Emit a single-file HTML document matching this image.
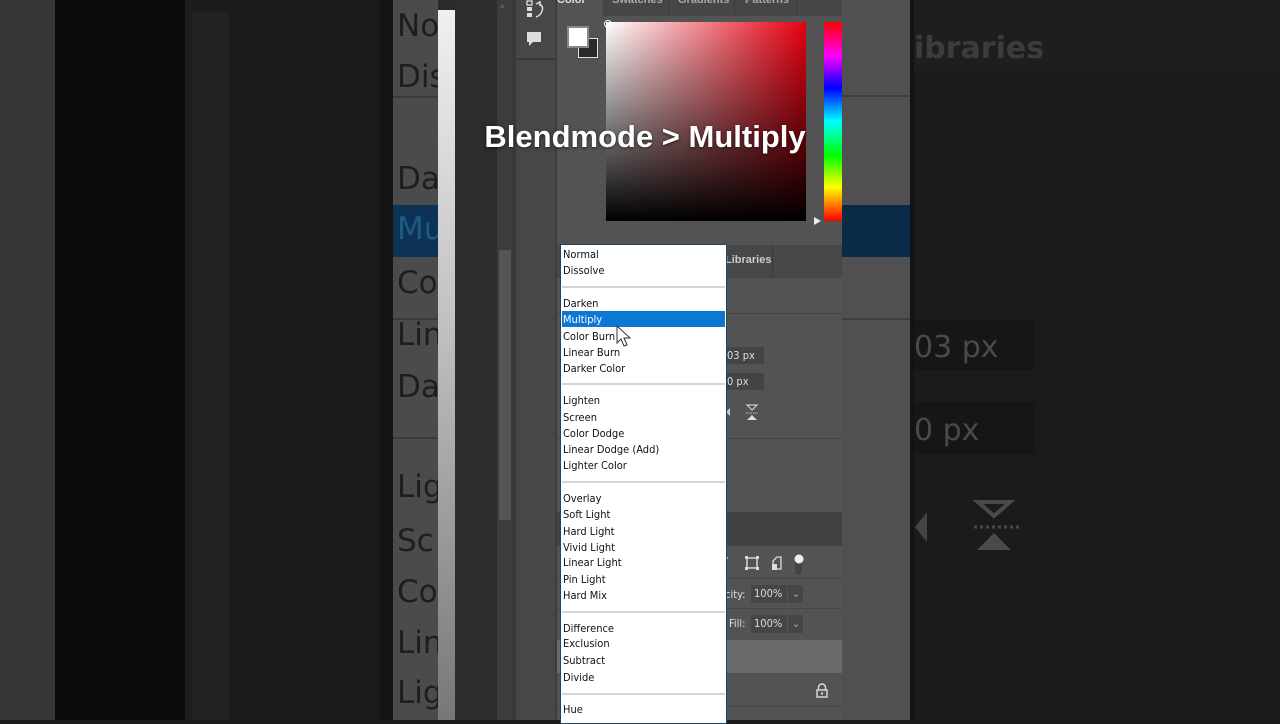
<!DOCTYPE html>
<html><head><meta charset="utf-8"><style>
*{margin:0;padding:0;box-sizing:border-box}
body{width:1280px;height:720px;overflow:hidden;position:relative;background:#1b1b1b;font-family:"Liberation Sans",sans-serif}
.a{position:absolute}
.big{position:absolute;left:397px;font-size:31px;color:#1e1e1e;font-family:"DejaVu Sans",sans-serif;line-height:1;white-space:nowrap}
.it{position:absolute;left:563px;font-size:11px;color:#111;line-height:14px;white-space:nowrap;font-family:"DejaVu Sans Condensed","Liberation Sans",sans-serif;letter-spacing:0}
.sep{position:absolute;left:562px;width:163px;height:2px;background:#d4d4d4}
.lbl{font-size:11px;color:#ddd;font-family:"DejaVu Sans Condensed",sans-serif}
</style></head><body>
<div class="a" style="left:0;top:0;width:55px;height:720px;background:#363636"></div>
<div class="a" style="left:55px;top:0;width:130px;height:720px;background:#0b0b0b"></div>
<div class="a" style="left:185px;top:0;width:55px;height:720px;background:#1c1c1c"></div>
<div class="a" style="left:192px;top:12px;width:37px;height:708px;background:#222"></div>
<div class="a" style="left:240px;top:0;width:140px;height:720px;background:#1a1a1a"></div>
<div class="a" style="left:380px;top:0;width:13px;height:720px;background:#151515"></div>
<div class="a" style="left:393px;top:0;width:45px;height:720px;background:#4b4b4b;overflow:hidden">
 <div class="a" style="left:0;top:96px;width:45px;height:2px;background:#3a3a3a"></div>
 <div class="a" style="left:0;top:205px;width:45px;height:52px;background:#0c3355"></div>
 <div class="a" style="left:0;top:318px;width:45px;height:2px;background:#3a3a3a"></div>
</div>
<div style="position:absolute;left:393px;top:0;width:45px;height:720px;overflow:hidden">
<div class="big" style="left:4px;top:11px">No</div>
<div class="big" style="left:4px;top:62px">Dis</div>
<div class="big" style="left:4px;top:164px">Da</div>
<div class="big" style="left:4px;top:214px;color:#1d5a85">Mu</div>
<div class="big" style="left:4px;top:268px">Co</div>
<div class="big" style="left:4px;top:320px">Lin</div>
<div class="big" style="left:4px;top:372px">Da</div>
<div class="a" style="left:0;top:437px;width:45px;height:2px;background:#3a3a3a"></div>
<div class="big" style="left:4px;top:472px">Lig</div>
<div class="big" style="left:4px;top:526px">Sc</div>
<div class="big" style="left:4px;top:577px">Co</div>
<div class="big" style="left:4px;top:628px">Lin</div>
<div class="big" style="left:4px;top:678px">Lig</div>
</div>
<div class="a" style="left:438px;top:0;width:17px;height:720px;background:#2a2a2a"></div>
<div class="a" style="left:438px;top:10px;width:17px;height:710px;background:linear-gradient(#f0f0f0,#c0c0c0 45%,#777)"></div>
<div class="a" style="left:455px;top:0;width:42px;height:720px;background:#2d2d2d"></div>
<div class="a" style="left:497px;top:0;width:16px;height:720px;background:#3c3c3c"></div>
<div class="a" style="left:499px;top:250px;width:12px;height:270px;background:#555"></div>
<div class="a" style="left:500px;top:4px;color:#777;font-size:10px">^</div>
<div class="a" style="left:513px;top:0;width:3px;height:720px;background:#383838"></div>
<div class="a" style="left:516px;top:0;width:39px;height:720px;background:#474747"></div>
<div class="a" style="left:516px;top:58px;width:39px;height:2px;background:#3a3a3a"></div>
<div class="a" style="left:555px;top:0;width:2px;height:720px;background:#3d3d3d"></div>
<svg class="a" style="left:524px;top:0" width="24" height="52" viewBox="0 0 24 52">
 <rect x="3" y="1" width="5" height="4" fill="none" stroke="#ddd" stroke-width="1.3"/>
 <rect x="3" y="7" width="5" height="4" fill="#ddd"/>
 <rect x="3" y="13" width="5" height="4" fill="#ddd"/>
 <path d="M12 4 L16 2 L16 6 M15 4 Q20 6 18 11 Q17 15 12 17" fill="none" stroke="#ddd" stroke-width="1.5"/>
 <path d="M3 32 h14 v10 h-8 l-4 4 v-4 h-2z" fill="#ddd"/>
</svg>
<div class="a" style="left:557px;top:0;width:285px;height:720px;background:#535353"></div>
<div class="a" style="left:603px;top:0;width:239px;height:16px;background:#464646"></div>
<div class="a" style="left:557px;top:-6px;font-size:11px;color:#ddd;font-weight:bold">Color</div>
<div class="a" style="left:612px;top:-6px;font-size:11px;color:#aaa;font-weight:bold">Swatches</div>
<div class="a" style="left:678px;top:-6px;font-size:11px;color:#aaa;font-weight:bold">Gradients</div>
<div class="a" style="left:745px;top:-6px;font-size:11px;color:#aaa;font-weight:bold">Patterns</div>
<div class="a" style="left:668px;top:0;width:1px;height:16px;background:#3a3a3a"></div>
<div class="a" style="left:734px;top:0;width:1px;height:16px;background:#3a3a3a"></div>
<div class="a" style="left:796px;top:0;width:1px;height:16px;background:#3a3a3a"></div>
<div class="a" style="left:578px;top:38px;width:20px;height:20px;background:#2a2a2a;border:1px solid #ddd"></div>
<div class="a" style="left:567px;top:26px;width:22px;height:22px;background:#fff;border:2px solid #888"></div>
<div class="a" style="left:606px;top:22px;width:200px;height:199px;background:linear-gradient(to bottom,rgba(0,0,0,0),#000),linear-gradient(to right,#fff,#e60010)"></div>
<div class="a" style="left:604px;top:20px;width:8px;height:8px;border:1px solid #fff;border-radius:50%"></div>
<div class="a" style="left:824px;top:22px;width:18px;height:199px;background:linear-gradient(#f00,#f0f 17%,#00f 33%,#0ff 50%,#0f0 67%,#ff0 83%,#f00)"></div>
<div class="a" style="left:814px;top:217px;width:0;height:0;border-top:4px solid transparent;border-bottom:4px solid transparent;border-left:7px solid #eee"></div>
<div class="a" style="left:557px;top:245px;width:285px;height:33px;background:#474747"></div>
<div class="a" style="left:725px;top:254px;font-size:11px;color:#ccc;font-weight:bold">Libraries</div>
<div class="a" style="left:772px;top:245px;width:1px;height:33px;background:#3a3a3a"></div>
<div class="a" style="left:557px;top:313px;width:285px;height:1px;background:#444"></div>
<div class="a" style="left:722px;top:347px;width:42px;height:17px;background:#444"></div>
<div class="a lbl" style="left:727px;top:349px">03 px</div>
<div class="a" style="left:722px;top:373px;width:42px;height:17px;background:#444"></div>
<div class="a lbl" style="left:727px;top:375px">0 px</div>
<svg class="a" style="left:724px;top:403px" width="40" height="20"><path d="M6 5 L2 9 L6 13z" fill="#ccc"/><path d="M23 2 h10 l-5 5z" fill="none" stroke="#ccc" stroke-width="1.2"/><path d="M22 10 h12" stroke="#ccc" stroke-dasharray="1.3 1"/><path d="M28 12 l5 5 h-10z" fill="#ddd"/></svg>
<div class="a" style="left:557px;top:438px;width:285px;height:1px;background:#444"></div>
<div class="a" style="left:557px;top:512px;width:285px;height:34px;background:#414141"></div>
<svg class="a" style="left:722px;top:553px" width="100" height="26"><path d="M2 5 h4 M2 5 v3" stroke="#ddd" stroke-width="1.4"/><rect x="25" y="5" width="10" height="10" fill="none" stroke="#ddd" stroke-width="1.4"/><rect x="23" y="3" width="3" height="3" fill="#ddd"/><rect x="34" y="3" width="3" height="3" fill="#ddd"/><rect x="23" y="14" width="3" height="3" fill="#ddd"/><rect x="34" y="14" width="3" height="3" fill="#ddd"/><path d="M51 8 l4 -4 h4 v12 h-8z" fill="none" stroke="#ddd" stroke-width="1.3"/><rect x="50" y="11" width="5" height="6" fill="#ddd"/><rect x="73" y="4" width="7" height="18" rx="3.5" fill="#444"/><circle cx="77" cy="6" r="4.5" fill="#eee"/></svg>
<div class="a" style="left:557px;top:578px;width:285px;height:1px;background:#464646"></div>
<div class="a lbl" style="left:725px;top:588px">city:</div>
<div class="a" style="left:751px;top:585px;width:36px;height:18px;background:#454545"></div>
<div class="a lbl" style="left:754px;top:587px">100%</div>
<div class="a" style="left:788px;top:585px;width:15px;height:18px;background:#454545"></div>
<div class="a lbl" style="left:792px;top:587px;color:#aaa">⌄</div>
<div class="a" style="left:557px;top:608px;width:285px;height:1px;background:#464646"></div>
<div class="a lbl" style="left:729px;top:617px">Fill:</div>
<div class="a" style="left:751px;top:615px;width:36px;height:18px;background:#454545"></div>
<div class="a lbl" style="left:754px;top:617px">100%</div>
<div class="a" style="left:788px;top:615px;width:15px;height:18px;background:#454545"></div>
<div class="a lbl" style="left:792px;top:617px;color:#aaa">⌄</div>
<div class="a" style="left:557px;top:640px;width:285px;height:33px;background:#6a6a6a"></div>
<svg class="a" style="left:815px;top:683px" width="14" height="16"><path d="M3.5 7 V4.5 a3.5 3.5 0 0 1 7 0 V7" fill="none" stroke="#ddd" stroke-width="1.4"/><rect x="2" y="7" width="10" height="7" fill="none" stroke="#ddd" stroke-width="1.4"/><rect x="6" y="9.5" width="2" height="2" fill="#ddd"/></svg>
<div class="a" style="left:557px;top:706px;width:285px;height:1px;background:#464646"></div>
<div class="a" style="left:842px;top:0;width:70px;height:720px;background:#505050"></div>
<div class="a" style="left:842px;top:95px;width:70px;height:2px;background:#3e3e3e"></div>
<div class="a" style="left:842px;top:205px;width:70px;height:52px;background:#0b2a48"></div>
<div class="a" style="left:842px;top:318px;width:70px;height:2px;background:#3e3e3e"></div>
<div class="a" style="left:910px;top:0;width:4px;height:720px;background:#0e1518"></div>
<div class="a" style="left:914px;top:0;width:366px;height:72px;background:#1e1e1e"></div>
<div class="a" style="left:914px;top:31px;font-size:30px;font-weight:bold;color:#3c3c3c;font-family:'DejaVu Sans',sans-serif;white-space:nowrap">ibraries</div>
<div class="a" style="left:914px;top:154px;width:366px;height:1px;background:#1e1e1e"></div>
<div class="a" style="left:914px;top:320px;width:121px;height:50px;background:#161616"></div>
<div class="a" style="left:914px;top:330px;font-size:30px;color:#4a4a4a;font-family:'DejaVu Sans',sans-serif;white-space:nowrap">03 px</div>
<div class="a" style="left:914px;top:402px;width:121px;height:52px;background:#161616"></div>
<div class="a" style="left:914px;top:413px;font-size:30px;color:#4a4a4a;font-family:'DejaVu Sans',sans-serif;white-space:nowrap">0 px</div>
<svg class="a" style="left:912px;top:500px" width="120" height="60"><path d="M15 12 L3 27 L15 42z" fill="#444"/><path d="M66 2 h32 l-16 14z" fill="none" stroke="#4a4a4a" stroke-width="4"/><path d="M62 27 h46" stroke="#4a4a4a" stroke-width="3" stroke-dasharray="3 3"/><path d="M82 33 l17 17 h-34z" fill="#4a4a4a"/></svg>
<div class="a" style="left:560px;top:244px;width:167px;height:480px;background:#fff;border:1px solid #1c4766"></div>
<div class="a" style="left:562px;top:311px;width:163px;height:16px;background:#0b78d3"></div>
<div class="it" style="top:248px">Normal</div>
<div class="it" style="top:264px">Dissolve</div>
<div class="sep" style="top:286px"></div>
<div class="it" style="top:297px">Darken</div>
<div class="it" style="top:313px;color:#fff">Multiply</div>
<div class="it" style="top:330px">Color Burn</div>
<div class="it" style="top:346px">Linear Burn</div>
<div class="it" style="top:362px">Darker Color</div>
<div class="sep" style="top:383px"></div>
<div class="it" style="top:394px">Lighten</div>
<div class="it" style="top:411px">Screen</div>
<div class="it" style="top:427px">Color Dodge</div>
<div class="it" style="top:443px">Linear Dodge (Add)</div>
<div class="it" style="top:459px">Lighter Color</div>
<div class="sep" style="top:481px"></div>
<div class="it" style="top:492px">Overlay</div>
<div class="it" style="top:508px">Soft Light</div>
<div class="it" style="top:525px">Hard Light</div>
<div class="it" style="top:541px">Vivid Light</div>
<div class="it" style="top:556px">Linear Light</div>
<div class="it" style="top:573px">Pin Light</div>
<div class="it" style="top:589px">Hard Mix</div>
<div class="sep" style="top:611px"></div>
<div class="it" style="top:622px">Difference</div>
<div class="it" style="top:637px">Exclusion</div>
<div class="it" style="top:654px">Subtract</div>
<div class="it" style="top:671px">Divide</div>
<div class="sep" style="top:693px"></div>
<div class="it" style="top:703px">Hue</div>
<svg class="a" style="left:616px;top:325px" width="16" height="26"><path d="M1 1 L1 18 L5 14 L8 21 L11 20 L8 13 L14 13z" fill="#fff" stroke="#333" stroke-width="1"/></svg>
<div class="a" style="left:482px;top:119px;width:326px;text-align:center;font-size:31px;font-weight:bold;color:#fff;font-family:'Liberation Sans',sans-serif;white-space:nowrap;text-shadow:0 1px 3px rgba(0,0,0,.6)">Blendmode &gt; Multiply</div>
</body></html>
